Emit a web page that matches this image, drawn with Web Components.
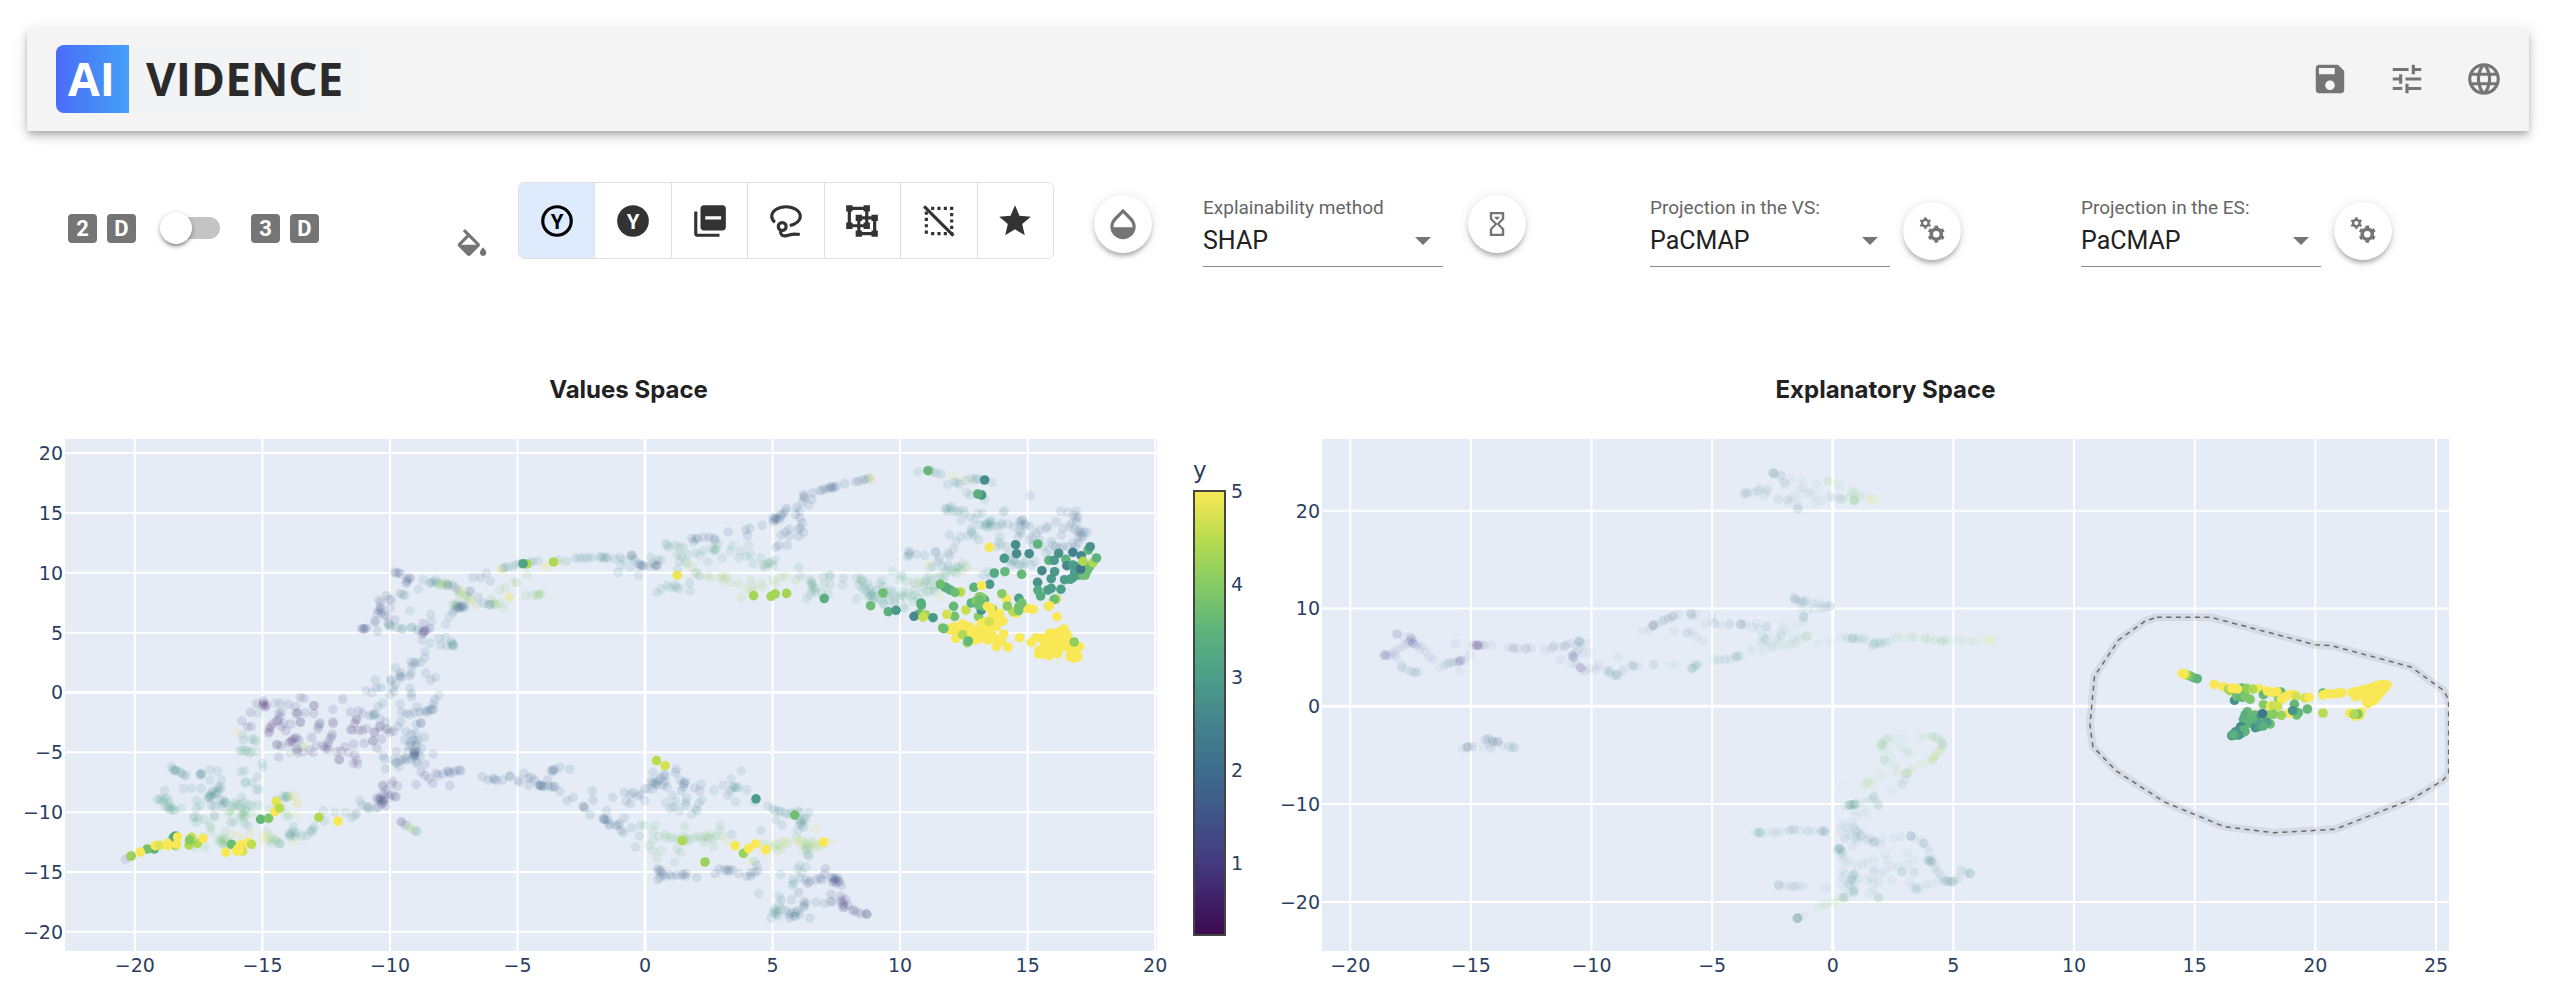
<!DOCTYPE html>
<html lang="en">
<head>
<meta charset="utf-8">
<meta name="viewport" content="width=device-width, initial-scale=1">
<title>AI Vidence</title>
<style>
  body { margin: 0; background: #fff; color: #212121; font-family: Roboto, "Liberation Sans", sans-serif; }
</style>
</head>
<body>
<vidence-app></vidence-app>

<script>
/* ---------- icons ---------- */
const spokes = (cx, cy, r1, r2, w) => [0, 60, 120, 180, 240, 300].map(a => {
  const t = (a + 90) * Math.PI / 180, c = Math.cos(t), s = Math.sin(t);
  return `<line x1="${cx + c * r1}" y1="${cy + s * r1}" x2="${cx + c * r2}" y2="${cy + s * r2}" stroke="currentColor" stroke-width="${w}"/>`;
}).join('');
const ICONS = {
  save: '<path d="M17 3H5c-1.11 0-2 .9-2 2v14c0 1.1.89 2 2 2h14c1.1 0 2-.9 2-2V7l-4-4zm-5 16c-1.66 0-3-1.34-3-3s1.34-3 3-3 3 1.34 3 3-1.34 3-3 3zm3-10H5V5h10v4z"/>',
  tune: '<path d="M3 17v2h6v-2H3zM3 5v2h10V5H3zm10 16v-2h8v-2h-8v-2h-2v6h2zM7 9v2H3v2h4v2h2V9H7zm14 4v-2H11v2h10zm-6-4h2V7h4V5h-4V3h-2v6z"/>',
  language: '<path d="M11.99 2C6.47 2 2 6.48 2 12s4.47 10 9.99 10C17.52 22 22 17.52 22 12S17.52 2 11.99 2zm6.93 6h-2.95c-.32-1.25-.78-2.45-1.38-3.56 1.84.63 3.37 1.91 4.33 3.56zM12 4.04c.83 1.2 1.48 2.53 1.91 3.96h-3.82c.43-1.43 1.08-2.76 1.91-3.96zM4.26 14C4.1 13.36 4 12.69 4 12s.1-1.36.26-2h3.38c-.08.66-.14 1.32-.14 2 0 .68.06 1.34.14 2H4.26zm.82 2h2.95c.32 1.25.78 2.45 1.38 3.56-1.84-.63-3.37-1.9-4.33-3.56zm2.95-8H5.08c.96-1.66 2.49-2.93 4.33-3.56C8.81 5.55 8.35 6.75 8.03 8zM12 19.96c-.83-1.2-1.48-2.53-1.91-3.96h3.82c-.43 1.43-1.08 2.76-1.91 3.96zM14.34 14H9.66c-.09-.66-.16-1.32-.16-2 0-.68.07-1.35.16-2h4.68c.09.65.16 1.32.16 2 0 .68-.07 1.34-.16 2zm.25 5.56c.6-1.11 1.06-2.31 1.38-3.56h2.95c-.96 1.65-2.49 2.93-4.33 3.56zM16.36 14c.08-.66.14-1.32.14-2 0-.68-.06-1.34-.14-2h3.38c.16.64.26 1.31.26 2s-.1 1.36-.26 2h-3.38z"/>',
  fill: '<path d="M16.56 8.94L7.62 0 6.21 1.41l2.38 2.38-5.15 5.15c-.59.59-.59 1.54 0 2.12l5.5 5.5c.29.29.68.44 1.06.44s.77-.15 1.06-.44l5.5-5.5c.59-.58.59-1.53 0-2.12zM5.21 10L10 5.21 14.79 10H5.21zM19 11.5s-2 2.17-2 3.5c0 1.1.9 2 2 2s2-.9 2-2c0-1.33-2-3.5-2-3.5z"/>',
  yRing: '<circle cx="12" cy="12" r="9" fill="none" stroke="currentColor" stroke-width="2"/><text x="12" y="16.8" text-anchor="middle" font-family="Liberation Sans Narrow, Roboto, sans-serif" font-weight="bold" font-size="13">Y</text>',
  yDisc: '<circle cx="12" cy="12" r="10"/><text x="12" y="16.8" text-anchor="middle" fill="#fff" font-family="Liberation Sans Narrow, Roboto, sans-serif" font-weight="bold" font-size="13">Y</text>',
  minusBoxes: '<path d="M4 6H2v14c0 1.1.9 2 2 2h14v-2H4zM20 2H8c-1.1 0-2 .9-2 2v12c0 1.1.9 2 2 2h12c1.1 0 2-.9 2-2V4c0-1.1-.9-2-2-2zm-1 9H9V9h10z"/>',
  lasso: '<g fill="none" stroke="currentColor" stroke-width="2"><path d="M5 12.8C3.7 11.800 3 10.400 3 9c0-3.300 4-6 9-6s9 2.700 9 6c0 2.700-2.700 5-6.600 5.800"/><circle cx="9.600" cy="15.500" r="2.500"/><path d="M8.800 17.800c-.6 2 .4 3.700 2.600 3.600 3-.2 3.600-1.900 9.300-.9"/></g>',
  group: '<g fill="none" stroke="currentColor" stroke-width="2"><path d="M4 4h11v11H4zM10 10h10v10H10z"/></g><path d="M2 2h4v4H2zM13 2h4v4h-4zM2 13h4v4H2zM18 8h4v4h-4zM8 18h4v4H8zM18 18h4v4h-4zM8 8h4v4H8zM13 13h4v4h-4z"/>',
  selectOff: '<path fill="none" stroke="currentColor" stroke-width="2" stroke-dasharray="2 2" d="M7 4h14M20 7v14M4 6v15M7 20h10"/><path d="M1.900 3.400l1.400-1.400 18.500 18.500-1.400 1.400z"/>',
  star: '<path d="M12 17.27L18.18 21l-1.64-7.03L22 9.24l-7.19-.61L12 2 9.19 8.63 2 9.24l5.46 4.73L5.82 21z"/>',
  opacity: '<path d="M17.66 8L12 2.35 6.34 8C4.78 9.56 4 11.64 4 13.64s.78 4.11 2.34 5.67 3.61 2.35 5.66 2.35 4.1-.79 5.66-2.35S20 15.64 20 13.64 19.22 9.56 17.66 8zM6 14c.01-2 .62-3.27 1.76-4.4L12 5.27l4.24 4.38C17.38 10.77 17.99 12 18 14H6z"/>',
  hourglass: '<path transform="translate(2.880 2.880) scale(.76)" d="M6 2h12v6l-4 4 4 4v6H6v-6l4-4-4-4V2m10 14.500l-4-4-4 4V20h8v-3.500m-4-5l4-4V4H8v3.500l4 4M10 6h4v.75l-2 2-2-2V6z"/>',
  gears: '<g fill="none" stroke="currentColor"><circle cx="7.800" cy="7" r="2.100" stroke-width="1.500"/><circle cx="14.700" cy="14" r="3.200" stroke-width="2.300"/></g>' + spokes(7.8, 7, 2.4, 3.7, 1.5) + spokes(14.7, 14, 3.8, 5.4, 2.3)
};

class UiIcon extends HTMLElement {
  connectedCallback() {
    if (this.shadowRoot) return;
    this.attachShadow({ mode: 'open' }).innerHTML = `
      <style>:host{display:inline-flex;width:38px;height:38px;flex:none} svg{width:100%;height:100%;fill:currentColor}</style>
      <svg viewBox="0 0 24 24" aria-hidden="true">${ICONS[this.getAttribute('name')]}</svg>`;
  }
}
customElements.define('ui-icon', UiIcon);

/* ---------- header ---------- */
class AppHeader extends HTMLElement {
  constructor() {
    super();
    this.attachShadow({ mode: 'open' }).innerHTML = `
      <style>
        :host{display:block}
        header{display:flex;align-items:center;justify-content:space-between;box-sizing:border-box;height:102px;padding:0 7px 3px 29px;background:#f4f4f4;
          box-shadow:0 3px 6px -2px rgba(0,0,0,.2),0 6px 8px rgba(0,0,0,.14),0 2px 16px rgba(0,0,0,.12)}
        .logo{display:flex;height:68px;border-radius:8px;overflow:hidden;background:#f2f3f5;color:#2a2a2a;text-decoration:none;
          font:bold 46px/66px "Open Sans","Noto Sans",sans-serif}
        .ai{padding:0 14px 0 12px;color:#fff;background:linear-gradient(90deg,#4a6cf7,#45a0f8)}
        .name{padding:0 18px 0 17px}
        nav{display:flex}
        button{width:77px;height:77px;border:0;padding:0;background:none;color:#757575;display:grid;place-items:center;cursor:pointer}
      </style>
      <header>
        <a class="logo" href="#"><span class="ai">AI</span><span class="name">VIDENCE</span></a>
        <nav>
          <button aria-label="Save"><ui-icon name="save"></ui-icon></button>
          <button aria-label="Settings"><ui-icon name="tune"></ui-icon></button>
          <button aria-label="Language"><ui-icon name="language"></ui-icon></button>
        </nav>
      </header>`;
  }
}
customElements.define('app-header', AppHeader);

/* ---------- toolbar parts ---------- */
class DimensionSwitch extends HTMLElement {
  constructor() {
    super();
    this.attachShadow({ mode: 'open' }).innerHTML = `
      <style>
        :host{display:block}
        label{display:flex;align-items:center}
        .tag{display:flex;gap:10px}
        .tag span{width:29px;height:29px;border-radius:4px;background:#757575;color:#fff;text-align:center;
          font:bold 22px/29px "Liberation Sans Narrow",Roboto,sans-serif}
        input{appearance:none;position:relative;width:60px;height:32px;margin:0 31px 0 24px;cursor:pointer}
        input::before{content:"";position:absolute;inset:5px 0 5px 6px;border-radius:11px;background:#c4c4c4}
        input::after{content:"";position:absolute;left:0;top:0;width:32px;height:32px;border-radius:50%;background:#fff;
          box-shadow:0 4px 3px -2px rgba(0,0,0,.25),0 2px 4px rgba(0,0,0,.2),0 2px 6px rgba(0,0,0,.14)}
        input:checked::after{left:28px}
      </style>
      <label><span class="tag"><span>2</span><span>D</span></span>
        <input type="checkbox" role="switch" aria-label="3D view">
        <span class="tag"><span>3</span><span>D</span></span></label>`;
  }
}
customElements.define('dimension-switch', DimensionSwitch);

class ToolGroup extends HTMLElement {
  constructor() {
    super();
    const tools = [['yRing', 'Colour by target'], ['yDisc', 'Colour by prediction'], ['minusBoxes', 'Residuals'],
      ['lasso', 'Lasso'], ['group', 'Groups'], ['selectOff', 'Clear selection'], ['star', 'Favourites']];
    this.attachShadow({ mode: 'open' }).innerHTML = `
      <style>
        :host{display:block;width:536px}
        div{display:flex;border:1px solid #e0e0e0;border-radius:6px;overflow:hidden}
        button{flex:1 1 0;height:75px;padding:0;border:0;background:#fff;color:#333;display:grid;place-items:center;cursor:pointer}
        button + button{border-left:1px solid #e0e0e0}
        button[aria-pressed=true]{background:#deebfc;color:#000}
      </style>
      <div role="group" aria-label="Colouring and selection">${tools.map(([n, l], i) =>
        `<button aria-label="${l}" aria-pressed="${i === 0}"><ui-icon name="${n}"></ui-icon></button>`).join('')}</div>`;
  }
}
customElements.define('tool-group', ToolGroup);

class RoundButton extends HTMLElement {
  connectedCallback() {
    if (this.shadowRoot) return;
    this.attachShadow({ mode: 'open' }).innerHTML = `
      <style>
        :host{display:block}
        button{width:58px;height:58px;border:0;padding:0;border-radius:50%;background:#fff;color:#757575;display:grid;place-items:center;cursor:pointer;
          box-shadow:0 5px 4px -2px rgba(0,0,0,.18),0 3px 5px rgba(0,0,0,.12),0 1px 12px rgba(0,0,0,.1)}
      </style>
      <button aria-label="${this.getAttribute('label')}"><ui-icon name="${this.getAttribute('icon')}"></ui-icon></button>`;
  }
}
customElements.define('round-button', RoundButton);

class SelectField extends HTMLElement {
  connectedCallback() {
    if (this.shadowRoot) return;
    const options = this.getAttribute('options').split(',');
    this.attachShadow({ mode: 'open' }).innerHTML = `
      <style>
        :host{display:block;width:240px}
        label{display:block;font-size:19px;line-height:24px;color:#666;white-space:nowrap}
        .box{display:grid;align-items:center;border-bottom:1px solid #8a8a8a}
        select,i{grid-area:1/1}
        select{appearance:none;width:100%;height:46px;padding:0 32px 5px 0;border:0;background:none;color:#212121;font:25px Roboto,sans-serif}
        i{justify-self:end;margin:0 12px 4px 0;border:8px solid transparent;border-top-color:#757575;border-bottom:0;pointer-events:none}
      </style>
      <label for="s">${this.getAttribute('label')}</label>
      <div class="box"><select id="s">${options.map(o => `<option>${o}</option>`).join('')}</select><i></i></div>`;
  }
}
customElements.define('select-field', SelectField);

class AppToolbar extends HTMLElement {
  constructor() {
    super();
    this.attachShadow({ mode: 'open' }).innerHTML = `
      <style>
        :host{display:block}
        .row{display:grid;grid-template-columns:391fr 744fr 447fr 431fr 479fr;align-items:start;height:90px}
        .set{display:flex;align-items:start}
        dimension-switch{padding-top:30px}
        .fill{color:#757575;padding-top:47px;margin:0 27px 0 -6px}
        .fill ui-icon{display:block}
        round-button{padding-top:13px;margin-left:25px}
        tool-group + round-button{margin-left:40px}
        .low round-button{padding-top:20px;margin-left:13px}
        select-field{padding-top:14px}
      </style>
      <div class="row">
        <dimension-switch></dimension-switch>
        <div class="set"><span class="fill"><ui-icon name="fill"></ui-icon></span><tool-group></tool-group>
          <round-button label="Opacity" icon="opacity"></round-button></div>
        <div class="set"><select-field label="Explainability method" options="SHAP,LIME"></select-field>
          <round-button label="Compute" icon="hourglass"></round-button></div>
        <div class="set low"><select-field label="Projection in the VS:" options="PaCMAP,UMAP,t-SNE,PCA"></select-field>
          <round-button label="Projection settings" icon="gears"></round-button></div>
        <div class="set low"><select-field label="Projection in the ES:" options="PaCMAP,UMAP,t-SNE,PCA"></select-field>
          <round-button label="Projection settings" icon="gears"></round-button></div>
      </div>`;
  }
}
customElements.define('app-toolbar', AppToolbar);

/* ---------- data ----------
   Points are quantised per tile: value = origin + step * n.
   "v:" opens a run of points that share the target value v; "*k" repeats a point. */
const T = (x0, dx, y0, dy, points, opacity) => ({ x0, dx, y0, dy, points, opacity });
const LEFT_A = [-20.976, .013062, 11.069, -.027848];
const LEFT_B = [-1.775, .015994, 22.765, -.030369];
const LEFT_C = [8.413, .013062, 20.259, -.027848];
const RIGHT_A = [-27.839, .018486, 35.409, -.041081];
const RIGHT_B = [.3188, .018486, 35.409, -.041081];
const RIGHT_C = [9.429, .013803, 11.892, -.034083];

const valuesSpace = {
  x: [-22.74, 20.07], y: [-21.6, 21.18],
  xTicks: [-20, -15, -10, -5, 0, 5, 10, 15, 20], yTicks: [-20, -15, -10, -5, 0, 5, 10, 15, 20],
  tiles: [
    T(...LEFT_A, `0.7: 461,423 461,430 463,435 466,442 458,436 470,436 441,432 422,457 612,437*2 571,486 572,487 612,461 669,486 670,491 698,417 504,480 500,484 490,490 483,500 478,505 476,519 479,514 515,500 528,512 543,492 546,543 550,538 537,549 542,545 556,534 502,554 514,558 562,568 563,578 559,566 655,548 667,523 650,560 640,557 655,568 605,532 688,599*2 693,573 706,560 735,585 730,610 743,612 731,552 722,508 727,510 738,480 741,477 734,490 746,511 757,511 770,506 789,544 789,542 802,565 722,456 808,502 812,498 815,537 829,508 763,550 793,517
      1.2: 515,455 506,460 510,470 521,490 557,440 560,457 559,462 586,458 565,460 571,412 582,415 628,492 626,500 624,507 631,489 669,448 506,591 600,570 610,578 580,576 620,556 500,554 396,483 424,500 413,500 746,452 758,460 535,433 510,429 561,534 568,541 645,567 660,537 665,530 680,575 716,578 740,600 795,517 835,508 850,514 840,518
      2: 790,463 790,466 780,467 797,462 810,477 828,485 805,440 819,430 768,392 786,398 797,359 800,383 814,383 844,358 843,363 857,373 848,383 857,323 872,338 872,350 869,346 874,353 903,341 899,347 904,305 906,320 911,311 918,307 932,307 945,293 948,340 962,360 977,352 900,385 905,401 905,411 871,432 840,404 853,395 875,457 890,461 900,463 915,458 930,457 945,453 950,457 955,452 962,447 967,450 970,432 975,420 987,406 970,447 920,494 933,489 921,440 872,485 864,500 889,515 905,522 917,520 943,532 910,540 918,545 925,540 920,556 905,555 915,570 917,575 913,580 912,585 916,587 910,590 925,577 898,560 935,565 893,575 887,595 880,598 873,600 890,602 905,598 862,607 858,609 868,621 850,600 970,582 920,605 922,612 820,587 823,597 827,627 930,588 885,540 900,545
      1.1: 860,575 945,613 912,578 934,636 945,647 958,656 978,640 969,670 919,674 1020,677 933,489 915,585
      1.7: 985,647 1000,642 1015,635 1020,640 1030,637 1040,632 1050,630 1053,633 1014,632
      1: 818,678 820,675 848,664 863,678 845,674 829,690 833,702 820,702 838,713 855,709 859,711 845,706 800,715 806,718 812,720 818,722 820,728 815,733 822,718 810,712 828,737 805,741
      2.4: 797,745 775,748 770,740 749,721 757,735 779,742 740,760 810,718 818,728
      1.3: 860,40 866,38 873,42 855,36 897,53 893,60 890,64 902,56 889,70 871,101 830,107 837,118 845,121 807,121 812,128 812,143 812,148 806,152 803,161 815,158 824,167 832,169 840,145 797,182 795,187 770,205 765,206 762,206 760,208 755,206 803,214 837,190 855,180
      2.6: 885,106 880,104 926,88 900,152 940,60 964,68 960,70 970,66 980,68 838,197 836,194 845,200 862,203 875,207 878,207 905,201 905,203 922,210 925,210 962,163 965,185 1018,170 1028,157 1007,192 937,241 960,250 945,275 987,236 1007,232 992,256 1010,258 1025,245 1030,254 1033,258 1026,257 1028,252 978,60
      0.8: 940,215 945,212 950,210 941,190 938,222 942,216 960,205
      4: 995,72 990,70 1000,76 985,75 1005,68 1012,75 1025,72 1048,92 1045,97 1068,110 1075,112 1080,118 1065,105 1050,104 1100,134 1155,133 1158,135 1150,128 1168,130 1143,117 1182,143 1187,82 1170,90 1215,65 1220,68 1252,45 1248,107 1270,105 1283,102 1290,104 1293,100 1285,107 1028,132 1035,137 1042,128
      2: 1012,72 1015,77 1030,78 1040,85 1078,95 1083,92 1040,135 1047,141 1052,142 1058,140 1062,144 1048,145 1040,142 1055,136 1035,150 1065,138 1089,52 1112,53 1130,40 1141,64 1105,112 1122,130 1140,134 1138,134
      5: 1172,27 1174,28 1197,113 1198,112 1199,110 1303,18 1312,22 1355,8 378,520 1085,125 1058,90
      2.8: 1180,25 1185,22 1195,21 1210,18 1220,14 1230,10 1260,8 1268,5 1285,3 1345,0 1370,4
      2.6: 185,620 190,628 195,630 192,632 200,632 210,636 215,640 222,646 228,647 272,640 273,643 270,645 275,642 300,630 300,660 323,633 335,659 220,686 245,685 164,691 274,686 323,682 330,680 305,697 300,705 297,710 305,710 315,703 310,695 325,693 333,686 300,713 320,700 293,715 341,720 340,730 330,720 335,740 315,737 305,737 347,727
      3.1: 142,718 150,720 155,715 165,715 175,715 160,725 178,730 165,740 175,745 182,750 190,750 195,750 175,740 185,743 213,745 260,722 270,735 260,745 255,770 250,773 265,775 283,779 313,770 313,765 258,787 393,635 403,632 405,667 407,668 427,668 443,650 457,610 460,622 440,690 447,687 395,712 375,728 380,735 390,735 400,727 415,735 425,735 370,740 362,787 372,787 400,765 403,790 415,797 395,745 445,735 407,750 350,730 396,570 405,573 412,570 418,580 425,575 425,538 433,538 437,545 398,527 400,540 540,578 445,460 390,573 495,430
      3.8: 360,755 365,750 355,760 395,760 405,755 405,770 390,770 400,775 425,760 300,795 300,802 345,815 335,835 340,840 330,845 345,845 350,835 335,850 355,850 340,855 350,860 325,838 305,815 280,832 470,815 480,840 485,850 495,838 500,845 485,835 530,765 535,770 515,748 255,862 284,862 480,748 440,575 575,560
      3: 508,850 510,852 540,820 545,825 550,815 550,800 560,820 555,830 537,823 540,830 590,828 600,815 605,815 610,808 612,800 640,752 676,757 707,758 735,765 725,774 645,783 575,827 500,720 520,708 530,708 528,712 535,710 525,715
      4.8: 545,712 540,705 555,708 560,730 565,730 557,765 365,820 420,820 385,830 400,835 460,830 475,825 548,845 462,843 585,560
      1.2: 46,898 60,890 873,784 876,788 887,795 4.2: 895,798 900,805 910,810 2.8: 918,813 922,815
      1.9: 1118,650 1135,660 1150,655 1155,658 1160,662 1178,660 1200,650 1200,648 1225,660 1228,667 1243,640 1255,655 1265,652 1257,675 1275,660 1285,675 1290,676 1293,678 1297,678 1293,675 1303,680 1315,678 1325,682 1332,680 1335,680 1313,660 1325,632 1328,630 1330,635 1335,628 1350,622 1380,628 1350,694 1372,722 1390,712 1420,738 1422,742 1425,744 1441,765 1447,693 1450,720 1480,775 1483,778 1495,780 1500,795`, .13),
    T(...LEFT_B, `2.6: 15,378 20,380 10,380 38,382 50,378 52,400 60,385 78,372 80,378 85,385 95,395 120,403 130,395 140,400 142,385 125,378 95,427 150,385 45,420 75,405 -60,380 -50,380 -40,380 -20,378 -30,380 0,378 5,376
      1.6: 100,398 105,400 108,402 98,402 1: 135,402 140,400 78,372
      3.2: 165,345 162,340 170,350 185,345 195,350 205,350 200,375 190,370 195,388 210,390 190,410 215,370 245,372 255,360 235,365 265,390 300,380 320,360 325,345 290,340 283,357 285,355 275,352 280,360 340,380 360,375 345,360 365,345 370,370 395,380 375,395 400,400 410,395 415,395 420,390 425,400 405,405 430,385
      1.9: 225,325 235,328 240,325 255,322 230,335 268,323 280,325 283,330 315,308 358,302 368,298 362,318 398,290 425,280 428,275 432,273 430,268 435,270 440,275 445,265 450,258 455,250 458,243 425,270 443,260 432,350 440,345 460,345 445,317 455,308 465,300 465,320 490,250 490,270 497,283 492,295 500,310 488,320 487,300 480,260 483,240 497,225 512,235 500,205 502,215 520,218 500,210 522,200 540,195 545,192 552,190 560,188 565,185 568,183 575,185 570,188 580,182 600,175 627,170 635,168 645,165 652,163 660,160
      3: 140,475 150,465 165,455 175,462 188,460 195,465 185,455 222,470 220,448 235,420 245,430
      4.2: 215,395 225,405 270,435 265,428 300,430 295,435 305,440 310,430 320,447 240,422 340,450 370,440 375,460 360,465 347,488 395,450 400,460 425,440 430,450 445,432 375,470 480,440 455,430
      3.2: 487,405 492,430 515,440 520,445 520,455 525,460 520,470 515,480 530,475 527,465 520,450 548,432 563,428 565,430 550,452 565,455 597,435 595,455 545,475 560,480 507,492 630,435 640,440 635,455 645,465 630,492
      2: 130,970 125,995 130,998 135,1000 140,995 145,990 150,985 158,975 160,980 140,1005 155,1005 165,1010 160,995 118,1015 110,1015 130,1015 185,970 188,960 197,990 205,1000 210,995 208,1000 205,1010 200,1020 232,1012 248,1003 245,1020 75,1030 82,1025 92,1035 100,1030 60,1025 65,1050 75,1055 32,1038 110,1048 17,1075 10,1098 15,1100 22,1112 40,1115 48,1110 60,1095 52,1130 58,1135 78,1122 45,1115
      2.7: 280,1018 302,1005 322,988 325,1010 330,1010 335,1012 340,1010 320,1020 347,965 360,1018 313,1032 333,1050 162,1052 178,1032 185,1050 213,1040 250,1045 243,1055 210,1052 97,1145 87,1175 100,1115 172,1070 180,1065 195,1075 225,1085 235,1070 238,1075 210,1060 380,1050 412,1062 425,1070 430,1075 440,1075 445,1078 455,1083 465,1085 470,1080 485,1075 490,1080 432,1100 447,1115 490,1100 495,1105 500,1100 495,1115 505,1095 490,1110 500,1120 512,1080 395,1130 323,1140 485,1130
      3.7: 130,1132 110,1115 135,1115 130,1155 145,1145 160,1140 165,1150 175,1148 185,1150 195,1155 205,1145 210,1160 220,1155 230,1150 240,1145 250,1150 260,1145 265,1150 275,1150 285,1145 293,1130 297,1115 208,1118 120,1170 130,1185 150,1185 190,1180 198,1190 210,1150 255,1162 278,1172 140,1205 183,1218
      4.2: 270,1140 300,1145 400,1165 415,1170 430,1165 440,1170 450,1160 445,1180 425,1175 480,1150 490,1155 500,1160 510,1165 520,1160 505,1170 515,1175 495,1170 525,1165 535,1170 500,1185 525,1180 460,1165 435,1185 545,1170
      4.9: 665,162 310,1160 370,1215 530,1125 485,1160 565,1160 455,1158 400,1190
      2.8: 507,1180 510,1195 512,1200 490,1225 505,1230 485,1235 495,1245 443,1250 380,1215 385,1225 490,1260
      1.8: 142,1235 145,1240 148,1245 150,1238 155,1250 160,1255 148,1258 142,1265 170,1250 178,1255 188,1252 200,1252 205,1250 212,1248 210,1255 238,1258 283,1248 293,1235 305,1238 312,1237 318,1238 315,1242 325,1237 340,1248 360,1255 370,1245 380,1245 388,1240 370,1255
      2.8: 390,1303 472,1280 475,1275 473,1265 440,1310 445,1320 440,1335 432,1350 425,1355 430,1360 435,1355 428,1345 438,1365 420,1370 445,1345
      1.4: 487,1300 505,1265 515,1270 530,1265 540,1260 545,1265 510,1275 553,1235 550,1250 567,1258 572,1260 575,1265 578,1262 575,1270 585,1268 580,1275 588,1270 583,1260 570,1272 592,1280
      1: 567,1305 570,1325 590,1325 595,1335 598,1330 600,1340 597,1342 595,1320 603,1318 610,1335 620,1350 623,1348 630,1355 640,1358 655,1360 653,1358 590,1310
      2: 500,1325 505,1330 500,1335 530,1327 550,1330 565,1325 470,1320 455,1350 465,1360 475,1365 465,1370 480,1365 480,1355 485,1350 490,1360 470,1355 515,1370 500,1340 655,1360`, .13),
    T(...LEFT_C, `2.8: 175,65 220,66 232,70 245,72 212,60 265,103 285,95 292,98 300,103 318,92 335,85 350,85 360,88 345,90 322,128 333,135 375,147 397,97 260,175 270,175 280,180 258,178 275,168 290,185 297,183 310,180 315,190 265,183 355,190 368,190 435,182 430,187 345,208 333,200 305,212 360,225 375,225 380,230 385,222 390,215 395,220 388,232 395,210 400,228 380,220 335,235 335,245 337,250 345,258 357,270 325,258 303,260 290,273 415,230 425,220 427,225 445,222 420,260 418,275 425,285 410,290 440,290
      2.2: 463,230 480,215 485,212 490,210 495,222 485,225 480,243 485,250 475,260 468,285 498,225 510,230 512,137 270,255
      1.9: 565,230 560,235 540,240 530,250 515,260 590,215 603,183 625,187 650,183 643,195 648,205 655,200 652,215 635,220 630,230 645,238 655,245 660,240 665,250 673,245 683,248 655,262 665,265 670,258 610,235 605,255 575,275 580,285 600,295 540,270 520,285 510,270 590,290 610,290 625,290 640,280 648,290 655,280
      2.6: 450,330 460,335 465,330 455,345 470,340 480,345 490,350 495,340 500,330 515,345 525,335 450,310 570,300 560,310 550,290 395,380 370,375 385,365
      2.4: 147,303 150,310 170,313 148,315 195,316 143,320 228,305 228,307 240,325 235,335 265,310 270,317 282,297 250,350 265,345
      3.4: 220,350 212,352 275,360 290,350 295,355 300,350 305,360 290,370 280,365 320,350 310,340 125,375 128,380 120,390 145,395 98,365 68,390 5,385 200,390 195,400 190,410 215,390 230,385 240,380 255,370 265,360 250,395 225,410 210,405 240,410 180,395 165,400 205,380 255,380 130,425 125,435 120,445 135,440 145,430 155,440 165,435 175,445 160,455 190,430 205,425 215,420 225,425 165,420 130,470 135,475 110,440 105,465
      2.9: 10,395 15,410 25,400 30,415 35,435 30,430 40,425 35,440 45,440 25,440 50,420 60,400 70,410 80,425 55,445 65,450 70,460 85,440 95,420 100,430 90,450 105,455 20,425 40,450 75,465
      4.9: 280,78 35,87 205,340 240,440 598,630 320,355 318,90 172,398`, .12),
    T(...LEFT_A, `3.5: 190,833 133,867 3.1: 197,828 3.8: 112,867 4.2: 64,888 197,857 5: 91,876 136,857 4.8: 149,856 5: 174,857 173,850 203,831 200,853
      4.6: 245,832 4.4: 237,855 262,850 4: 239,840 5: 279,835 3.6: 452,778 3.9: 476,775 4.85: 499,725 5: 495,755 4.5: 508,744 4.4: 627,772 5: 684,784 348,877
      3.7: 365,853 5: 380,873 385,865 392,855 393,862 415,848 4.7: 398,873 4.55: 425,853 5: 388,870 4.4: 1251,12 1331,6 3.1: 1240,11`, 1),
    T(...LEFT_B, `4.9: 190,427 4.3: 377,483 430,478 420,485 458,477 3.4: 550,491 4.5: 139,937 4.7: 160,951 3: 383,1042 3.7: 478,1087 4.4: 202,1157 4.2: 352,1192 5: 332,1171 365,1179 382,1166 407,1182 548,1161 4.2: 258,1216`, 1),
    T(...LEFT_C, `3.6: 205,62 2.7: 375,90 2.9: 366,135 3.4: 355,132 5: 389,292 2.7: 468,284 471,311 509,311 3.5: 534,282 2.9: 434,325 3.3: 404,369 3.6: 436,365 486,373
      2.6: 547,362 2.8: 534,397 597,310 3.5: 568,331 2.9: 584,331 585,365 575,386 3.5: 619,328 2.4: 640,307 2.6: 665,317 622,347 3.5: 686,300 2.8: 692,290 672,345 3: 650,350 640,345 645,365 655,372 640,383 632,388 615,389 660,375
      3.7: 670,375 677,375 683,362 690,350 2.2: 663,357 4.4: 700,338 670,334 3.5: 711,324 3.3: 535,421 543,438 3: 565,420 575,415 604,418 478,445 4.5: 590,447 3.7: 584,448 5: 592,500 4.8: 567,469 5: 570,467
      4.5: 303,426 3.4: 256,411 263,415 272,420 3.7: 242,403 286,427 70,429 33,467 3.4: 86,485 2.9: 109,481 3.4: 184,459 185,466 3.6: 178,492 4.3: 198,494 2.6: 163,499 4.6: 190,501 2.9: 220,503
      3.6: 282,469 3.8: 285,499 4.7: 262,493 4.6: 319,480 3.5: 335,459 343,412 2.9: 390,403 5: 366,407 440,447 503,475 521,478 470,490 4: 427,431 4.5: 460,485
      4: 357,500 370,445 350,452 2.7: 365,480 3.5: 375,450 370,470 4: 360,440 365,442 3.7: 360,450 357,465 4.3: 400,478
      5: 283,530 308,522 330,530 275,540 265,537 295,545 289,565 298,555 320,545 335,545 345,555 355,560 325,560 357,567 340,570 370,560 385,570 398,557 405,565 370,545 410,590 445,591 425,573 432,552 374,525 380,515 405,510 420,490 415,505 430,513 410,530 395,530 380,545 345,540 365,520 400,495 383,469 392,474 480,563
      515,577 530,563 545,565 555,575 570,550 585,550 600,545 613,537 620,550 605,560 590,565 575,570 560,565 595,575 610,565 625,560 540,600 555,590 537,612 552,612 570,617 560,605 580,605 595,610 590,595 575,595 605,590 615,580 625,570 620,590 635,580 645,590 660,590 640,605 650,610 632,620 643,625 655,620 645,615 635,600 570,580 585,585
      3.8: 487,459 478,470 477,482 4: 443,468 4.4: 309,554 4.2: 323,578 3.6: 326,573 4.7: 389,515 4.1: 644,576 3.9: 249,534 3.7: 253,536`, 1)
  ]
};

const explanatorySpace = {
  x: [-21.17, 25.54], y: [-25.02, 27.33],
  xTicks: [-20, -15, -10, -5, 0, 5, 10, 15, 20, 25], yTicks: [-20, -10, 0, 10, 20],
  tiles: [
    T(...RIGHT_A, `2.8: 1372,281*4 1375,284*2 1390,287*2 1397,305*2 1388,290 1400,310 1308,332*3 1315,331*2 1325,329 1335,327 1340,325*2 1343,318 1360,323*2 1355,330 1352,338 1427,371*3 1430,365 1413,297 1437,300 1440,318 1447,332 1455,330 1465,335 1470,310 1467,355 1480,350 1384,346*2 1405,348*2 1415,340 1410,355 1427,345 1500,340*2 1510,343 1522,345*2 1430,322
      4.1: 1495,302*3 1515,308 1550,330 1555,348*3 1540,345 1545,335 1553,325
      2.1: 1420,592*3 1423,598*2 1430,605 1437,600*2 1445,600*2 1440,605 1460,607 1470,605 1465,618 1480,620 1480,608 1485,615 1490,613 1500,612*3 2.6: 1440,640*4 1437,620 1450,625
      1.8: 1104,660*5 1100,665 1095,672 1080,675 1115,655 1125,650*2 1130,645 1138,643*2 1148,638*3 1160,635 1188,632*3 1200,635 1190,640 1235,640 1240,655*2 1255,660 1275,658*2 1300,658*4 1310,657 1325,665 1357,663*2 1340,670 1180,680*2 1190,675 1200,690 1215,700 1150,675 1220,655 1335,655
      2.9: 1350,690*2 1355,697*2 1345,700 1365,705 1370,715*2 1350,710 1390,685*2 1385,700 1395,660 1390,675 1405,675 1415,695 1400,710 1420,705 1430,690 1425,660 1440,650 1380,695 1360,680
      4: 1448,688*4 1435,695 1425,705 1410,708 1330,720 1385,712
      2.9: 1290,738*4 1298,737*2 1280,742 1275,745 1265,745*2 1250,745*2 1240,747 1320,722 1350,725 1190,768*4 1195,765*2 1200,758*3 1205,760 1155,760 1140,760 1500,700 1525,690 1550,693*3 1475,705
      1.1: 529,682*3 560,690*2 562,695*2 558,700*2 555,705 565,705*3 548,708 570,710 575,708 585,712 580,720 595,725 530,720 522,727 525,735 515,733 510,737 503,735*3 500,735*2 540,715 545,690 600,740 610,745
      2.2: 540,765*2 540,760 550,770 560,775*2 570,778*3 580,775 530,745 635,760 640,757 645,755*2 655,752 625,765 670,775
      1.2: 655,752 665,752 668,750*2 672,748*3 680,748 692,735
      .7: 708,710*4 712,710*3 700,710*2 720,710 725,710 740,710 660,705 780,715 790,717*2 800,718 818,718*2 830,717 860,722 875,720
      1.4: 880,712*2 895,715 905,712*2 910,708 920,705 925,740*3 922,735*3 928,730 935,722 945,730 895,745 920,755
      2.2: 937,700*4 940,703 930,710 940,715 950,705 960,728
      .8: 930,757 940,765*3 943,770 950,775 960,768 975,770 980,760 1000,772
      2: 1005,775*2 1005,782 1015,785 1022,784*4 1035,775 1035,770 1055,760*2 1060,762*2 1070,762 1025,740 1105,758*2
      1.9: 688,963*3 685,965*2 675,967 698,962*2 722,963 727,945*2 733,942*2 740,945 745,950*3 755,950*4 735,955 740,965*2 765,960 780,963*2 2.7: 790,964*3 795,965
      2.9: 1340,1176*4 1333,1175 1345,1177*2 1360,1176 1375,1176*2 1385,1175 1395,1173 2.1: 1410,1170*2 1418,1169*2 1430,1170 1450,1172*2 1465,1172 1480,1173*2 1487,1173*4
      2.7: 1385,1307*4 1.8: 1400,1308 1410,1310 1420,1310*2 1430,1308 1440,1311 1490,1315 2.8: 1427,1389*7 1425,1390*2 1440,1383
      4.1: 1472,1363 1480,1358 1487,1355*2 1497,1352 1507,1350*2 1520,1342
      3: 1530,1338*3 1520,1215*4 1515,1220*2 1527,1225*2 1525,1235 1530,1245 1545,1248 1537,1250 1545,1108*3 1540,1110 1555,1106*3 1525,1302 1540,1300 1550,1285*2 1545,1325 1553,1325*2 1560,1260 1560,1200`, .05),
    T(...RIGHT_B, `3.8: 5,345*2 31,350*4 25,328 33,332 45,335 40,342 55,340 0,315 4.9: 65,343 72,347*3 85,350
      2.9: 15,692*2 30,694*2 40,694*2 50,695*2 60,697 75,708*3 80,703*2 90,705*3 100,702*2 110,702 70,712
      3.9: 125,690*2 140,692 160,690*2 165,692 190,693*3 200,695 212,697*2 228,700*3 235,698*2 250,700 265,698 275,700 290,698 300,700 4.9: 320,698 333,697*4 343,698
      3.7: 92,955*4 95,960*2 100,945*2 108,942*2 120,942 140,942 90,965 95,975 98,995*3 105,1000 115,990 122,1010 110,970 130,960 150,975*2 140,965 155,980 180,938 188,938 205,937*3 215,940*2 222,945*2 228,952*3 230,960*3
      4.5: 225,970*2 220,975*2 212,985*3 208,992*3 205,998*2 195,1000 185,1005 175,1008 160,1018*2 4: 150,1028*4 145,1030*2 130,1030 125,1020 2.8: 138,1055*2 145,1045
      4.2: 62,1050*3 55,1055*2 75,1045 90,1035 100,1035 70,1060 50,1062 3: 115,1072 75,1087*3 70,1092 85,1108*3 80,1100 65,1097 55,1100 20,1107*3 28,1107*3 35,1105*2 45,1103 10,1110 30,1120 50,1130 35,1135 60,1125 4.5: 5,1060
      2: 25,1150 30,1160 35,1170*2 40,1175 20,1175 15,1165 45,1185*2 35,1190*2 50,1180 25,1185 60,1195*2 75,1200*3 80,1198 90,1207 70,1190 10,1190*2 0,1170 5,1155 25,1210 95,1190 118,1190 135,1187 158,1185*4 165,1190 180,1195 187,1203*3 195,1215 200,1225
      2.7: 0,1218*3 5,1230 195,1245*2 200,1247*4 205,1243*2 205,1250*2 215,1260 210,1265 220,1275*2 225,1285 220,1295 235,1290 232,1297*2 240,1298*3 247,1298*3 253,1299*3 260,1290 265,1290 270,1270*2 280,1272 285,1278 291,1278*4
      2.5: 150,1228 150,1255 165,1245 165,1275*2 138,1273*3 130,1260 115,1260 105,1245 100,1230 75,1245 60,1250 50,1255 75,1270*2 90,1280 70,1290 100,1270 85,1300 75,1300 60,1295 30,1280*3 25,1295*3 20,1305*2 40,1290 35,1300 10,1280 5,1290 10,1315 30,1320*3 5,1270 75,1320 65,1325 115,1295 170,1317*3 165,1310 180,1315 192,1305 205,1305 155,1300
      3.5: 85,1338*4 10,1338*2 4: 0,1340`, .05),
    T(...RIGHT_C, `3.5: 411,266 400,263 3.7: 392,259 4: 383,256 4.6: 375,253 5: 371,251 366,251 462,283 489,290 4.3: 510,302 505,298 2.8: 523,331 3.8: 530,318 3.6: 540,320 548,322 3.9: 555,318 570,328 3.6: 545,294 4.1: 560,295 5: 515,294 597,296 4.4: 578,297 5: 520,295 532,297
      3.6: 610,314 5: 622,303 636,307 4.1: 655,325 3.6: 662,306 5: 650,305 4: 610,344 5: 632,348 4.6: 640,348 5: 665,328 675,320 685,315 700,313 4.7: 653,349 708,318 735,324 5: 747,322
      3.6: 742,357 703,343 3.8: 710,375 3.6: 715,368 5: 688,369 2.8: 698,362 4.2: 664,376 5: 570,372 3.6: 562,365 3.4: 555,375 560,385 550,388 3.6: 575,378 585,375 3: 600,385 3.5: 565,400 580,395 590,400 2.9: 607,395 3.6: 615,385 4: 625,375 640,373 3.7: 630,402 3: 620,397 600,405
      2.7: 586,413 3: 595,410 3.4: 609,408 2.5: 542,410 2.7: 540,415 3.5: 550,420 555,424 545,430 2.8: 535,435 527,425 520,432 515,437 3.1: 525,435 3.4: 519,434 2.2: 607,371
      3.6: 789,309 5: 789,315 800,311 815,312 825,311 835,310 845,308 4.5: 789,369
      5: 875,308 885,305 890,310 900,302 887,320 900,312 910,300 920,298 930,295 940,291 950,287 960,285 970,284 981,285 975,292 968,300 960,308 950,305 940,300 930,305 920,310 910,315 915,322 918,330 920,335 924,341 930,335 940,332 948,325 955,315 870,370 882,372 903,366 900,375 886,379 3.9: 894,372 4.4: 882,373`, 1)
  ],
  lasso: {
    tile: RIGHT_C,
    points: '290,82 452,82 765,164 815,167 1053,231 1152,302 1166,330 1166,550 1150,570 1055,628 825,718 640,728 492,710 315,637 168,543 98,470 89,405 103,258 175,150 255,93'
  }
};
const DATASETS = { values: valuesSpace, explanatory: explanatorySpace };

/* ---------- colour scale ---------- */
const STOPS = [[.22, 61, 10, 80], [1, 67, 58, 127], [1.5, 64, 84, 135], [2, 62, 109, 140], [2.5, 68, 131, 140], [3, 76, 158, 137], [3.5, 93, 179, 124], [4, 134, 203, 100], [4.5, 185, 220, 79], [5, 249, 232, 85]];
const colour = v => {
  let i = 1;
  while (i < STOPS.length - 1 && v > STOPS[i][0]) i++;
  const a = STOPS[i - 1], b = STOPS[i], t = Math.max(0, Math.min(1, (v - a[0]) / (b[0] - a[0])));
  return `rgb(${[1, 2, 3].map(k => Math.round(a[k] + t * (b[k] - a[k]))).join(',')})`;
};

class ColourBar extends HTMLElement {
  constructor() {
    super();
    const stops = STOPS.map(([v, r, g, b]) => `rgb(${r},${g},${b}) ${(v - .22) / 4.78 * 100}%`).join(',');
    this.attachShadow({ mode: 'open' }).innerHTML = `
      <style>
        :host{display:block;color:#2a3f5f;font-family:"DejaVu Sans",sans-serif}
        .name{font-size:23px;line-height:26px;height:33px}
        .body{display:flex;gap:5px}
        .bar{flex:none;width:29px;height:442px;border:2px solid #444;background:linear-gradient(to top,${stops})}
        .ticks{display:flex;flex-direction:column;font-size:19px;line-height:24px;gap:69px;margin-top:-11px}
      </style>
      <div class="name">y</div>
      <div class="body"><div class="bar"></div>
        <div class="ticks"><span>5</span><span>4</span><span>3</span><span>2</span><span>1</span></div></div>`;
  }
}
customElements.define('colour-bar', ColourBar);

/* ---------- scatter plot, redrawn whenever its width changes ---------- */
class ScatterPlot extends HTMLElement {
  constructor() {
    super();
    this.attachShadow({ mode: 'open' }).innerHTML = `
      <style>
        :host{display:block;min-width:0}
        svg{display:block;width:100%;height:552px;overflow:visible}
        text{font:19px "DejaVu Sans",sans-serif;fill:#2a3f5f}
      </style><svg role="img"></svg>`;
  }
  connectedCallback() {
    this.draw();
    new ResizeObserver(() => this.draw()).observe(this);
  }
  draw() {
    const w = this.clientWidth;
    if (!w || w === this.drawn) return;
    this.drawn = w;
    const d = DATASETS[this.getAttribute('data')], left = 65, pw = w - left, ph = 512;
    const X = v => left + (v - d.x[0]) / (d.x[1] - d.x[0]) * pw;
    const Y = v => ph - (v - d.y[0]) / (d.y[1] - d.y[0]) * ph;
    const label = v => String(v).replace('-', '\u2212');
    let s = `<clipPath id="c"><rect x="${left}" y="0" width="${pw}" height="${ph}"/></clipPath>
      <rect x="${left}" y="0" width="${pw}" height="${ph}" fill="#e5ecf6"/><g stroke="#fff" clip-path="url(#c)">`;
    for (const v of d.xTicks) s += `<line x1="${X(v)}" x2="${X(v)}" y1="0" y2="${ph}" stroke-width="${v ? 2 : 3}"/>`;
    for (const v of d.yTicks) s += `<line x1="${left}" x2="${w}" y1="${Y(v)}" y2="${Y(v)}" stroke-width="${v ? 2 : 3}"/>`;
    s += '</g>';
    for (const t of d.tiles) {
      let v = 0;
      s += `<g fill-opacity="${t.opacity}">`;
      for (const tok of t.points.split(/\s+/)) {
        if (tok.endsWith(':')) { v = parseFloat(tok); continue; }
        const [xy, n = 1] = tok.split('*'), [px, py] = xy.split(',').map(Number);
        const c = `<circle cx="${X(t.x0 + t.dx * px).toFixed(1)}" cy="${Y(t.y0 + t.dy * py).toFixed(1)}" r="4.800" fill="${colour(v)}"/>`;
        s += c.repeat(+n);
      }
      s += '</g>';
    }
    if (d.lasso) {
      const [x0, dx, y0, dy] = d.lasso.tile;
      const pts = d.lasso.points.split(' ').map(p => { const [a, b] = p.split(',').map(Number); return `${X(x0 + dx * a)},${Y(y0 + dy * b)}`; }).join(' ');
      s += `<g fill="none" clip-path="url(#c)"><polygon points="${pts}" stroke="#000" stroke-opacity=".07" stroke-width="8"/>
        <polygon points="${pts}" stroke="#6a6a6a" stroke-width="1.500" stroke-dasharray="5 4.500"/></g>`;
    }
    for (const v of d.xTicks) s += `<text x="${X(v)}" y="533" text-anchor="middle">${label(v)}</text>`;
    for (const v of d.yTicks) s += `<text x="${left - 2}" y="${Y(v) + 7}" text-anchor="end">${label(v)}</text>`;
    this.shadowRoot.querySelector('svg').innerHTML = s;
  }
}
customElements.define('scatter-plot', ScatterPlot);

class ChartPanel extends HTMLElement {
  constructor() {
    super();
    this.attachShadow({ mode: 'open' }).innerHTML = `
      <style>
        :host{display:block;min-width:0}
        h2{margin:0 0 34px;text-align:center;font:bold 24px/30px Inter,sans-serif;color:#212121}
        .body{display:flex;align-items:flex-start}
        ::slotted(scatter-plot){flex:1}
        ::slotted(colour-bar){width:64px;padding:18px 0 0 36px}
      </style>
      <h2><slot name="title"></slot></h2>
      <div class="body"><slot></slot></div>`;
  }
}
customElements.define('chart-panel', ChartPanel);

class VidenceApp extends HTMLElement {
  constructor() {
    super();
    this.attachShadow({ mode: 'open' }).innerHTML = `
      <style>
        :host{display:block}
        app-header{margin:29px 31px 51px 27px}
        app-toolbar{padding-left:68px}
        main{display:grid;grid-template-columns:1fr 1fr;margin-top:103px;padding-right:46px}
        .padded{margin-right:65px}
        .padded span{margin-right:-65px}
      </style>
      <app-header></app-header>
      <app-toolbar></app-toolbar>
      <main>
        <chart-panel><span slot="title">Values Space</span>
          <scatter-plot data="values"></scatter-plot><colour-bar></colour-bar></chart-panel>
        <chart-panel class="padded"><span slot="title">Explanatory Space</span>
          <scatter-plot data="explanatory"></scatter-plot></chart-panel>
      </main>`;
  }
}
customElements.define('vidence-app', VidenceApp);
</script>
</body>
</html>
